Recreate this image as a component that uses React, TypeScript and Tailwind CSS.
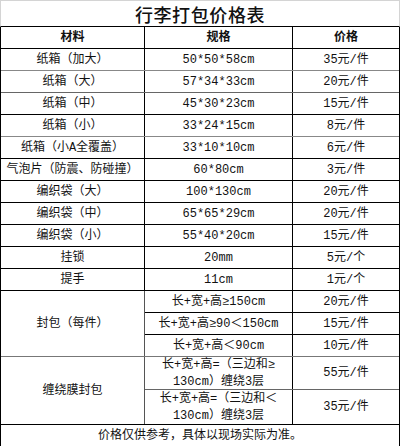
import React from "react";

const FONT = { fontFamily: '"Liberation Mono", "Noto Sans CJK SC", monospace' };

type Row = { a: string; b: string; c: string; line?: string };

const rows: Row[] = [
  { a: "纸箱（加大）", b: "50*50*58cm", c: "35元/件", line: "border-[#888]" },
  { a: "纸箱（大）", b: "57*34*33cm", c: "20元/件", line: "border-[#666]" },
  { a: "纸箱（中）", b: "45*30*23cm", c: "15元/件" },
  { a: "纸箱（小）", b: "33*24*15cm", c: "8元/件", line: "border-[#888]" },
  { a: "纸箱（小A全覆盖）", b: "33*10*10cm", c: "6元/件" },
  { a: "气泡片（防震、防碰撞）", b: "60*80cm", c: "3元/件" },
  { a: "编织袋（大）", b: "100*130cm", c: "20元/件" },
  { a: "编织袋（中）", b: "65*65*29cm", c: "20元/件" },
  { a: "编织袋（小）", b: "55*40*20cm", c: "15元/件" },
  { a: "挂锁", b: "20mm", c: "5元/个" },
  { a: "提手", b: "11cm", c: "1元/个" },
];

function Cell({ children, className = "" }: { children: React.ReactNode; className?: string }) {
  return (
    <div className={"flex items-center justify-center text-center " + className}>{children}</div>
  );
}

export default function App() {
  return (
    <div className="w-[400px] h-[446px] bg-white text-[12px] text-[#111] leading-none overflow-hidden" style={FONT}>
      <div
        className="h-[27px] border-t border-l border-r border-[#d4d4d4] border-b border-b-black flex items-center justify-center"
        style={{ fontFamily: '"Noto Sans CJK SC", sans-serif' }}
      >
        <span className="text-[18px] font-medium tracking-[0.6px] text-[#111]">行李打包价格表</span>
      </div>
      <div className="border-l border-r border-black">
        <div className="h-[22px] flex border-b border-black font-bold">
          <Cell className="w-[144px] border-r border-black">材料</Cell>
          <Cell className="w-[148px] border-r border-black">规格</Cell>
          <Cell className="flex-1">价格</Cell>
        </div>
        {rows.map((r) => (
          <div key={r.a} className={"h-[22px] flex border-b " + (r.line ?? "border-black")}>
            <Cell className="w-[144px] border-r border-black">{r.a}</Cell>
            <Cell className="w-[148px] border-r border-black">{r.b}</Cell>
            <Cell className="flex-1">{r.c}</Cell>
          </div>
        ))}
        <div className="flex border-b border-[#777]">
          <Cell className="w-[144px] border-r border-[#555]">封包（每件）</Cell>
          <div className="flex-1 flex flex-col">
            <div className="h-[22px] flex border-b border-black">
              <Cell className="w-[148px] border-r border-black">长+宽+高≥150cm</Cell>
              <Cell className="flex-1">20元/件</Cell>
            </div>
            <div className="h-[22px] flex border-b border-black">
              <Cell className="w-[148px] border-r border-black">长+宽+高≥90＜150cm</Cell>
              <Cell className="flex-1">15元/件</Cell>
            </div>
            <div className="h-[21px] flex">
              <Cell className="w-[148px] border-r border-black">长+宽+高＜90cm</Cell>
              <Cell className="flex-1">10元/件</Cell>
            </div>
          </div>
        </div>
        <div className="flex border-b border-black">
          <Cell className="w-[144px] border-r border-[#555]">缠绕膜封包</Cell>
          <div className="flex-1 flex flex-col">
            <div className="h-[33px] flex border-b border-[#666]">
              <Cell className="w-[148px] border-r border-black flex-col gap-[3px] leading-[14px]">
                <span>长+宽+高=（三边和≥</span>
                <span>130cm）缠绕3层</span>
              </Cell>
              <Cell className="flex-1">55元/件</Cell>
            </div>
            <div className="h-[34px] flex">
              <Cell className="w-[148px] border-r border-black flex-col gap-[3px] leading-[14px]">
                <span>长+宽+高=（三边和＜</span>
                <span>130cm）缠绕3层</span>
              </Cell>
              <Cell className="flex-1">35元/件</Cell>
            </div>
          </div>
        </div>
        <div className="h-[23px] flex items-center justify-center border-b border-black">
          价格仅供参考，具体以现场实际为准。
        </div>
      </div>
    </div>
  );
}
